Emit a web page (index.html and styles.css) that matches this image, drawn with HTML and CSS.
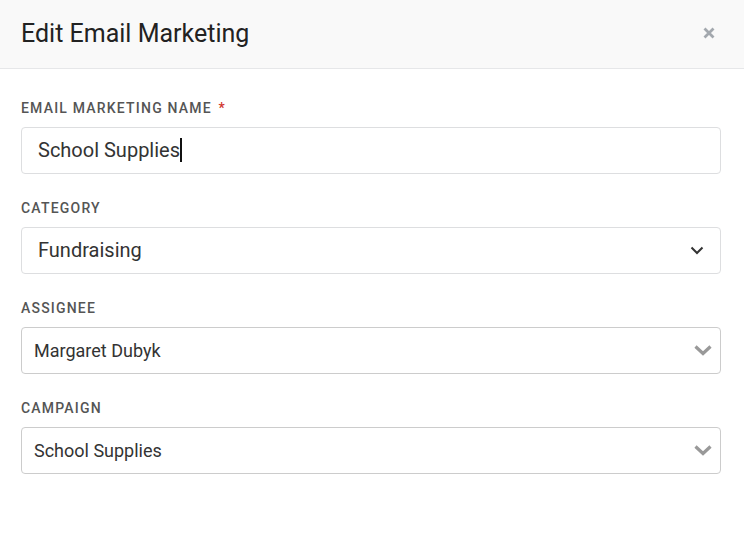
FILE: index.html
```html
<!DOCTYPE html>
<html>
<head>
<meta charset="utf-8">
<link rel="stylesheet" href="styles.css">
</head>
<body>
<div class="modal">
  <div class="modal-header">
    <h1 class="title">Edit Email Marketing</h1>
    <button class="close" aria-label="Close">
      <svg width="14" height="14" viewBox="0 0 14 14"><path d="M2.5 2.5 L11.5 11.5 M11.5 2.5 L2.5 11.5" stroke="#a3a8ae" stroke-width="2.8" stroke-linecap="butt"/></svg>
    </button>
  </div>
  <div class="modal-body">
    <div class="field">
      <label class="label">Email Marketing Name <span class="req">*</span></label>
      <div class="input"><span class="value">School Supplies</span><span class="caret"></span></div>
    </div>
    <div class="field">
      <label class="label">Category</label>
      <div class="input select"><span class="value">Fundraising</span>
        <svg class="chev" width="14" height="9" viewBox="0 0 14 9"><path d="M1.5 1.5 L7 7 L12.5 1.5" fill="none" stroke="#333" stroke-width="2"/></svg>
      </div>
    </div>
    <div class="field">
      <label class="label">Assignee</label>
      <div class="input select2"><span class="value small">Margaret Dubyk</span>
        <svg class="chev2" width="18" height="11" viewBox="0 0 18 11"><path d="M1.5 1.5 L9 8.5 L16.5 1.5" fill="none" stroke="#999" stroke-width="3.2"/></svg>
      </div>
    </div>
    <div class="field">
      <label class="label">Campaign</label>
      <div class="input select2"><span class="value small">School Supplies</span>
        <svg class="chev2" width="18" height="11" viewBox="0 0 18 11"><path d="M1.5 1.5 L9 8.5 L16.5 1.5" fill="none" stroke="#999" stroke-width="3.2"/></svg>
      </div>
    </div>
  </div>
</div>
</body>
</html>
```
FILE: styles.css
```css
* { box-sizing: border-box; }
html, body { margin: 0; padding: 0; background: #fff; }
body { font-family: Roboto, "Liberation Sans", sans-serif; color: #333; }
.modal { width: 744px; }
.modal-header {
  height: 69px;
  background: #f9f9f9;
  border-bottom: 1px solid #e6e7e9;
  display: flex;
  align-items: center;
  justify-content: space-between;
  padding: 0 28px 2px 21px;
}
.title { margin: 0; font-size: 25px; font-weight: 400; color: #222; letter-spacing: 0; }
.close { background: none; border: 0; padding: 0; display: flex; }
.modal-body { padding: 29px 23px 0 21px; display: flex; flex-direction: column; gap: 24px; }
.field { display: flex; flex-direction: column; gap: 9px; }
.label { font-size: 14px; line-height: 20px; text-transform: uppercase; letter-spacing: 1.2px; color: #555; font-weight: 500; }
.req { color: #d0342c; margin-left: 2px; }
.input {
  height: 47px;
  border: 1px solid #dddee0;
  border-radius: 4px;
  display: flex;
  align-items: center;
  padding: 0 16px 1px 16px;
  position: relative;
}
.value { font-size: 20px; color: #333; }
.value.small { font-size: 18px; }
.caret { display: inline-block; width: 2px; height: 24px; background: #111; }
.select { justify-content: space-between; padding-right: 16px; }
.select2 { justify-content: space-between; padding: 0 8px 1px 12px; border-color: #ccc; }
.chev { display: block; }
.chev2 { display: block; }
```
